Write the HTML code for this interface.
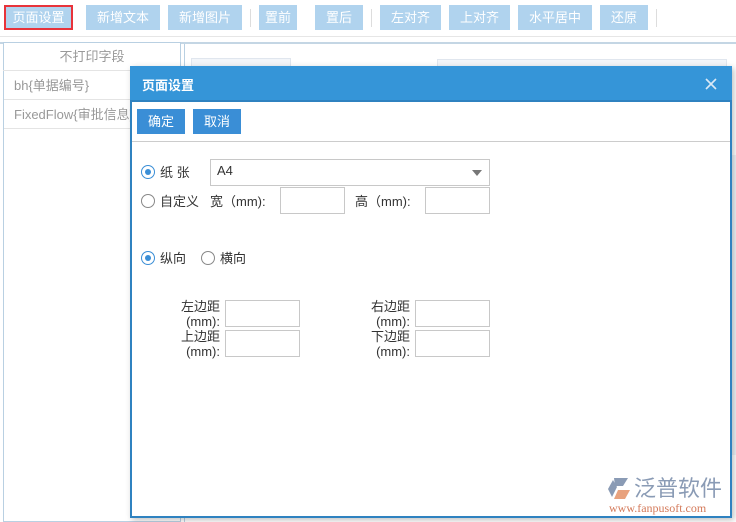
<!DOCTYPE html>
<html><head><meta charset="utf-8"><style>
*{box-sizing:border-box;margin:0;padding:0}
body{width:736px;height:522px;overflow:hidden;background:#fff;font-family:"Liberation Sans","Noto Sans CJK SC",sans-serif;font-size:13px;color:#333;position:relative}
.a{position:absolute}
.tb{background:#b0d3ee;color:#fff;height:25px;line-height:25px;text-align:center;top:5px;font-size:13px}
.sep{top:9px;width:1px;height:18px;background:#ddd}
.inp{position:absolute;border:1px solid #c8c8c8;background:#fff}
.rad{position:absolute;width:14px;height:14px;border:1px solid #888;border-radius:50%;background:#fff}
.rad.on{border-color:#3a8ed6}
.rad.on:after{content:"";position:absolute;left:3px;top:3px;width:6px;height:6px;border-radius:50%;background:#3a8ed6}
.t{position:absolute;white-space:nowrap;font-size:13px;color:#333}
</style></head><body>
<div class="a" style="left:0;top:0;width:736px;height:37px;background:#fff;border-bottom:1px solid #e6e6e6"></div>
<div class="a" style="left:0;top:42px;width:736px;height:2px;background:#c4d6e4"></div>
<div class="a tb" style="left:4px;width:69px;border:2px solid #e8333a;line-height:21px">页面设置</div>
<div class="a tb" style="left:86px;width:74px">新增文本</div>
<div class="a tb" style="left:168px;width:74px">新增图片</div>
<div class="a sep" style="left:250px"></div>
<div class="a tb" style="left:259px;width:38px">置前</div>
<div class="a tb" style="left:315px;width:48px">置后</div>
<div class="a sep" style="left:371px"></div>
<div class="a tb" style="left:380px;width:61px">左对齐</div>
<div class="a tb" style="left:449px;width:61px">上对齐</div>
<div class="a tb" style="left:518px;width:74px">水平居中</div>
<div class="a tb" style="left:600px;width:48px">还原</div>
<div class="a sep" style="left:656px"></div>

<div class="a" style="left:3px;top:42px;width:178px;height:480px;border:1px solid #b9d0e2;background:#fff"></div>
<div class="t" style="left:3px;top:42px;width:178px;height:29px;line-height:29px;text-align:center;color:#999;border-bottom:1px solid #e4e4e4">不打印字段</div>
<div class="t" style="left:4px;top:71px;width:176px;height:29px;line-height:29px;padding-left:10px;color:#999;border-bottom:1px solid #e4e4e4">bh{单据编号}</div>
<div class="t" style="left:4px;top:100px;width:176px;height:29px;line-height:29px;padding-left:10px;color:#999;border-bottom:1px solid #e4e4e4;overflow:hidden">FixedFlow{审批信息}</div>
<div class="a" style="left:184px;top:44px;width:552px;height:478px;border-left:1px solid #b9d0e2;background:#fff"></div>
<div class="a" style="left:191px;top:58px;width:100px;height:12px;border:1px solid #e0e6ee;background:#f2f5f9"></div>
<div class="a" style="left:437px;top:59px;width:290px;height:10px;border:1px solid #e0e6ee;background:#f2f5f9"></div>
<div class="a" style="left:731px;top:155px;width:5px;height:300px;background:#eef3f8"></div>

<div class="a" style="left:130px;top:66px;width:602px;height:452px;border:2px solid #2f82c0;background:#fff;box-shadow:2px 2px 6px rgba(0,0,0,.25)"></div>
<div class="a" style="left:130px;top:66px;width:602px;height:36px;background:#3595d8;border-bottom:2px solid #2f82c0"></div>
<div class="t" style="left:142px;top:75px;color:#fff;font-weight:bold;font-size:13px">页面设置</div>
<svg class="a" style="left:704px;top:77px" width="14" height="14" viewBox="0 0 14 14"><path d="M2 2L12 12M12 2L2 12" stroke="#dbe9f6" stroke-width="1.6"/></svg>
<div class="a" style="left:137px;top:109px;width:48px;height:25px;background:#3a8ed6;color:#fff;text-align:center;line-height:25px">确定</div>
<div class="a" style="left:193px;top:109px;width:48px;height:25px;background:#3a8ed6;color:#fff;text-align:center;line-height:25px">取消</div>
<div class="a" style="left:132px;top:141px;width:598px;height:1px;background:#ccc"></div>

<div class="rad on" style="left:141px;top:165px"></div>
<div class="t" style="left:160px;top:162px">纸 张</div>
<div class="inp" style="left:210px;top:159px;width:280px;height:27px"></div>
<div class="t" style="left:217px;top:163px">A4</div>
<div class="a" style="left:472px;top:170px;width:0;height:0;border-left:5px solid transparent;border-right:5px solid transparent;border-top:6px solid #777"></div>
<div class="rad" style="left:141px;top:194px"></div>
<div class="t" style="left:160px;top:191px">自定义</div>
<div class="t" style="left:210px;top:191px">宽（mm):</div>
<div class="inp" style="left:280px;top:187px;width:65px;height:27px"></div>
<div class="t" style="left:355px;top:191px">高（mm):</div>
<div class="inp" style="left:425px;top:187px;width:65px;height:27px"></div>

<div class="rad on" style="left:141px;top:251px"></div>
<div class="t" style="left:160px;top:248px">纵向</div>
<div class="rad" style="left:201px;top:251px"></div>
<div class="t" style="left:220px;top:248px">横向</div>

<div class="t" style="left:175px;top:299px;text-align:right;width:45px;line-height:15px">左边距<br>(mm):</div>
<div class="inp" style="left:225px;top:300px;width:75px;height:27px"></div>
<div class="t" style="left:175px;top:329px;text-align:right;width:45px;line-height:15px">上边距<br>(mm):</div>
<div class="inp" style="left:225px;top:330px;width:75px;height:27px"></div>
<div class="t" style="left:365px;top:299px;text-align:right;width:45px;line-height:15px">右边距<br>(mm):</div>
<div class="inp" style="left:415px;top:300px;width:75px;height:27px"></div>
<div class="t" style="left:365px;top:329px;text-align:right;width:45px;line-height:15px">下边距<br>(mm):</div>
<div class="inp" style="left:415px;top:330px;width:75px;height:27px"></div>

<svg class="a" style="left:606px;top:477px" width="26" height="24" viewBox="0 0 26 24"><path d="M8 1h14l-5 8H9z" fill="#8a9bb5"/><path d="M2 12l5-9 4 7-5 10z" fill="#8a9bb5"/><path d="M12 13h12l-5 9H8z" fill="#e8a27e"/></svg>
<div class="t" style="left:634px;top:476px;font-size:22px;line-height:26px;color:#8a9bb5">泛普软件</div>
<div class="t" style="left:609px;top:502px;font-size:12px;line-height:12px;color:#d47a5a;font-family:'Liberation Serif',serif">www.fanpusoft.com</div>
</body></html>
